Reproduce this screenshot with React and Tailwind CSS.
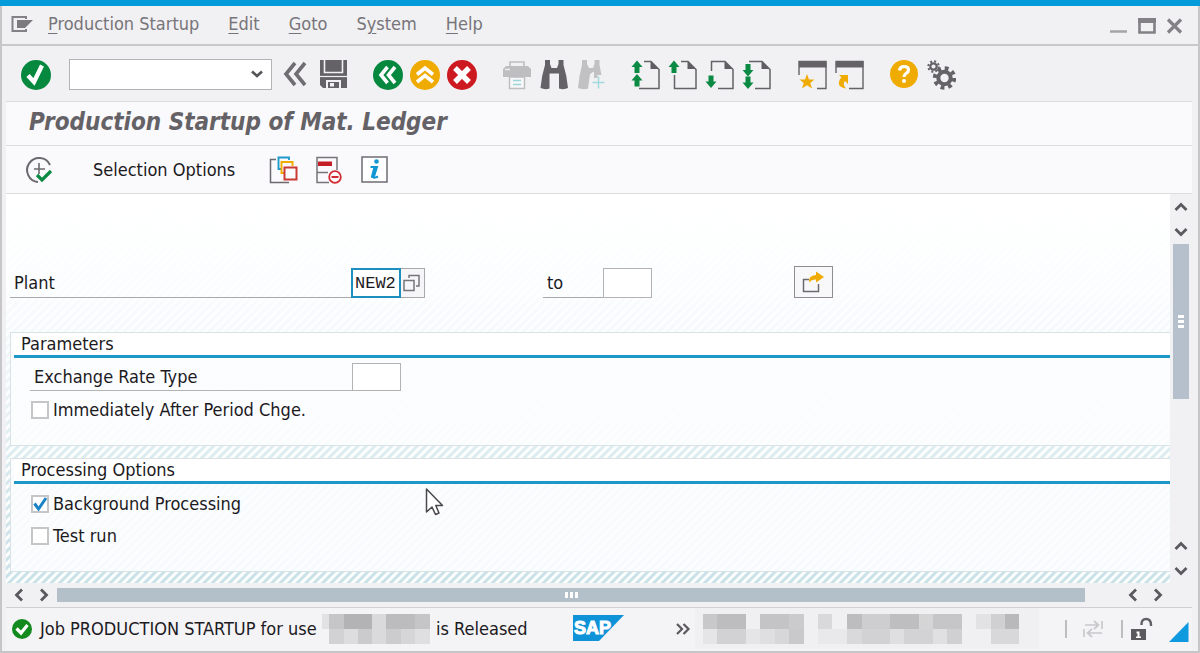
import React from 'react';

const FONT = "font-['DejaVu_Sans_Condensed','Noto_Sans',sans-serif]";

const MENUS = ['Production Startup', 'Edit', 'Goto', 'System', 'Help'];
const MENU_KEYS = [0, 0, 0, 1, 0];

function Icon({ children, className = 'size-[30px]', box = '0 0 30 30' }) {
  return (
    <svg className={`block shrink-0 ${className}`} viewBox={box} fill="none" aria-hidden="true">
      {children}
    </svg>
  );
}

function IconButton({ label, disabled, children }) {
  return (
    <button type="button" aria-label={label} title={label} disabled={disabled} className="block shrink-0">
      <Icon>{children}</Icon>
    </button>
  );
}

function Group({ children }) {
  return <div className="flex items-center gap-[7px]">{children}</div>;
}

const UP = 'M6 0 L11.5 6.5 H8.5 V12.5 H3.5 V6.5 H0.5 Z';
const DOWN = 'M6 12.5 L11.5 6 H8.5 V0 H3.5 V6 H0.5 Z';

function PageIcon({ open, arrows }) {
  return (
    <>
      <path d={open} stroke="#646266" strokeWidth="1.5" />
      <path d="M19.5 1 L27.5 9 H19.5 Z" fill="#5f5d61" />
      {arrows.map(([d, y]) => (
        <path key={y} d={d} transform={`translate(0 ${y})`} fill="#0b8a43" />
      ))}
    </>
  );
}

function Toolbar() {
  return (
    <div className="flex h-14 shrink-0 items-center gap-[25px] border-b border-[#dcdbdd] pt-[6px] pb-1 pl-[15px]">
      <div className="flex items-center gap-[7px]">
        <IconButton label="Enter">
          <circle cx="15" cy="15" r="15" fill="#07883f" />
          <path d="M7 15.5 L13 22 L21 5.5" stroke="#fff" strokeWidth="4.4" />
        </IconButton>
        <div className="relative mr-[2px] ml-[11px] w-[203px]">
          <select
            aria-label="Command field"
            className="block h-[31px] w-full appearance-none border border-[#b3b2b5] bg-white px-2 text-base outline-none"
          >
            <option value=""></option>
          </select>
          <svg className="pointer-events-none absolute top-[11px] right-[9px] h-2 w-3" viewBox="0 0 12 8" fill="none">
            <path d="M1 1.5 L6 6 L11 1.5" stroke="#555357" strokeWidth="2.6" />
          </svg>
        </div>
        <IconButton label="Close command field">
          <path d="M14 3 L5 14 L14 25 M24 3 L15 14 L24 25" stroke="#6f6d71" strokeWidth="3.6" />
        </IconButton>
        <IconButton label="Save">
          <path d="M2 0 H29 V28 H5 L2 25 Z" fill="#646266" />
          <path d="M6.5 0 V12.5 H24.5 V0" stroke="#f1f0f2" strokeWidth="1.6" />
          <path d="M2 16.5 H29" stroke="#f1f0f2" strokeWidth="1.2" />
          <path d="M8 28 V20 H23 V28 Z" fill="#f1f0f2" />
          <path d="M10 22 H21 V28 H10 Z" fill="#646266" />
          <path d="M12 23 H16 V26.5 H12 Z" fill="#f1f0f2" />
        </IconButton>
      </div>
      <Group>
        <IconButton label="Back">
          <circle cx="15" cy="15" r="15" fill="#07883f" />
          <path d="M14.5 7 L8 15 L14.5 23 M22 7 L15.5 15 L22 23" stroke="#fff" strokeWidth="3.6" />
        </IconButton>
        <IconButton label="Exit">
          <circle cx="15" cy="15" r="15" fill="#efab00" />
          <path d="M7 14.5 L15 8 L23 14.5 M7 22 L15 15.5 L23 22" stroke="#fff" strokeWidth="3.6" />
        </IconButton>
        <IconButton label="Cancel">
          <circle cx="15" cy="15" r="15" fill="#cc1a20" />
          <path d="M8 8 L22 22 M22 8 L8 22" stroke="#fff" strokeWidth="5.4" />
        </IconButton>
      </Group>
      <Group>
        <IconButton label="Print" disabled>
          <path d="M8 6 V2 H22 V6" stroke="#bebdc0" strokeWidth="1.6" />
          <path d="M4 6 H26 L29 9 V17 H1 V9 Z" fill="#bebdc0" />
          <path d="M3 9.5 H8" stroke="#f1f0f2" strokeWidth="1.4" />
          <path d="M7.5 17 H22.5 V28.5 H7.5 Z" fill="#f7f6f8" stroke="#bebdc0" strokeWidth="1.4" />
          <path d="M11 20.5 H19 M11 24.5 H19" stroke="#9ad6d8" strokeWidth="1.5" />
        </IconButton>
        <IconButton label="Find">
          <path d="M6 0 H11 V4 L12.5 8 H18 L19.5 4 V0 H24.5 V5 Q28 16 29 28 Q25 30 20 28.5 V13.5 H10.5 V28.5 Q6 30 1.5 28 Q2.5 16 6 5 Z" fill="#646266" />
        </IconButton>
        <IconButton label="Find next" disabled>
          <path d="M6 0 H11 V4 L13 8 H17 L18.5 4 V0 H23.5 V5 L25.5 15 H21.5 V18 H18 V11.5 L14 14 L12 28.5 Q7 30 2 28 Q3 16 6 5 Z" fill="#c1c0c3" />
          <path d="M22.5 16.5 V28.5 M16.5 22.5 H28.5" stroke="#a3d9de" strokeWidth="1.5" />
        </IconButton>
      </Group>
      <Group>
        <IconButton label="First page">
          <PageIcon open="M13 1.5 H20 L28 9.5 V28.5 H8" arrows={[[UP, 0.5], [UP, 14]]} />
        </IconButton>
        <IconButton label="Previous page">
          <PageIcon open="M13 1.5 H20 L28 9.5 V28.5 H6.5 V15" arrows={[[UP, 0.5]]} />
        </IconButton>
        <IconButton label="Next page">
          <PageIcon open="M6.5 11 V1.5 H20 L28 9.5 V28.5 H13" arrows={[[DOWN, 15.5]]} />
        </IconButton>
        <IconButton label="Last page">
          <PageIcon open="M7 1.5 H20 L28 9.5 V28.5 H13" arrows={[[DOWN, 4], [DOWN, 16.5]]} />
        </IconButton>
      </Group>
      <Group>
        <IconButton label="New session">
          <path d="M2 15 V1.5 H29 V28.5 H20" stroke="#646266" strokeWidth="1.4" />
          <path d="M2 1 H29.5 V7.5 H2 Z" fill="#646266" />
          <path d="M10 14 L12 19.5 H17.5 L13.3 23 L15 28.5 L10 25.2 L5 28.5 L6.7 23 L2.5 19.5 H8 Z" fill="#efab00" />
        </IconButton>
        <IconButton label="Create shortcut">
          <path d="M2 13 V1.5 H29 V28.5 H15" stroke="#646266" strokeWidth="1.4" />
          <path d="M2 1 H29.5 V7.5 H2 Z" fill="#646266" />
          <path d="M5 15 H14 V24 L11 21 Q8 24 12 28.5 Q2 27 6 19 L7.5 17.5 Z" fill="#efab00" />
        </IconButton>
      </Group>
      <Group>
        <IconButton label="Help">
          <circle cx="15" cy="14" r="14" fill="#efab00" />
          <path d="M10.5 10.5 Q11 6.5 15 6.5 Q19.5 6.5 19.5 10 Q19.5 12 17 13.5 Q15 14.8 15 17" stroke="#fff" strokeWidth="3.2" />
          <circle cx="15" cy="21" r="2" fill="#fff" />
        </IconButton>
        <IconButton label="Customize local layout">
          <circle cx="18.5" cy="18" r="6.2" stroke="#646266" strokeWidth="4" />
          <circle cx="18.5" cy="18" r="9.7" stroke="#646266" strokeWidth="4" strokeDasharray="3.8 3.81" />
          <circle cx="7.5" cy="6.5" r="3.2" stroke="#646266" strokeWidth="2.2" />
          <circle cx="7.5" cy="6.5" r="5.2" stroke="#646266" strokeWidth="2" strokeDasharray="2.04 2.04" />
        </IconButton>
      </Group>
    </div>
  );
}

function MenuBar() {
  return (
    <div className="flex h-10 shrink-0 items-center border-b-2 border-[#c9c8cb] pr-[14px] pb-[2px] pl-[9px]">
      <button type="button" aria-label="System menu">
        <Icon className="h-[18px] w-[22px]" box="0 0 22 18">
          <path d="M15 14 V16 H1.5 V2 H15 V4" stroke="#838185" strokeWidth="2" />
          <path d="M6 5 H22 L14 13 H6 Z" fill="#7c7a7e" />
        </Icon>
      </button>
      <nav className="ml-[15px] flex flex-1 gap-[29px] text-[18px] leading-6 text-[#77757a]">
        {MENUS.map((m, i) => (
          <button type="button" key={m} className="whitespace-pre">
            {m.slice(0, MENU_KEYS[i])}
            <span className="underline underline-offset-[3px]">{m[MENU_KEYS[i]]}</span>
            {m.slice(MENU_KEYS[i] + 1)}
          </button>
        ))}
      </nav>
      <div className="flex items-center gap-[10px] pt-1">
        <button type="button" aria-label="Minimize">
          <Icon className="h-4 w-[18px]" box="0 0 18 16">
            <path d="M0 13.5 H17" stroke="#a5a4a7" strokeWidth="2.5" />
          </Icon>
        </button>
        <button type="button" aria-label="Maximize">
          <Icon className="h-4 w-[18px]" box="0 0 18 16">
            <path d="M1.5 2 V14.5 H16.5 V2" stroke="#838185" strokeWidth="2.6" />
            <path d="M0 0 H18 V5 H0 Z" fill="#838185" />
          </Icon>
        </button>
        <button type="button" aria-label="Close">
          <Icon className="h-4 w-[18px]" box="0 0 18 16">
            <path d="M2 1.5 L15 14.5 M15 1.5 L2 14.5" stroke="#838185" strokeWidth="3.2" />
          </Icon>
        </button>
      </div>
    </div>
  );
}

function AppToolbar() {
  return (
    <div className="flex h-12 shrink-0 items-center border-b border-[#dcdbdd] bg-[#faf9fb] pl-[18px]">
      <IconButton label="Execute">
        <path d="M26 10 A12 12 0 1 0 14 27" stroke="#6c6a6e" strokeWidth="2" />
        <path d="M15 8 V19 M10 14 H21" stroke="#6c6a6e" strokeWidth="1.6" />
        <path d="M13 20 L18 25 L27 16" stroke="#0b8a43" strokeWidth="3.2" />
      </IconButton>
      <button type="button" className="ml-[39px] text-[18px] leading-6 text-[#1c1a1e]">
        Selection Options
      </button>
      <div className="ml-[34px] flex items-center gap-4">
        <IconButton label="Get variant">
          <path d="M7 4.5 H1.5 V27.5 H20" stroke="#6c6a6e" strokeWidth="1.5" />
          <path d="M12 14 H9.5 V2.5 H20 V5" stroke="#1f9bcb" strokeWidth="1.9" />
          <path d="M15 18 H12.5 V7 H23.5 V11" stroke="#efab00" strokeWidth="1.9" />
          <rect x="15.5" y="12.5" width="12" height="12" stroke="#c93a35" strokeWidth="2" />
        </IconButton>
        <IconButton label="Dynamic selections">
          <path d="M22 15 V2.5 H2 V27.5 H14 M2 17.5 H13" stroke="#77757a" strokeWidth="1.5" />
          <rect x="3" y="6.5" width="14" height="4.5" fill="#c41e26" />
          <circle cx="20" cy="22" r="5.8" fill="#fff" stroke="#d22a31" strokeWidth="1.8" />
          <path d="M16.5 22 H23.5" stroke="#d22a31" strokeWidth="2" />
        </IconButton>
        <IconButton label="Information">
          <rect x="1" y="2" width="25" height="25" fill="#fff" stroke="#77757a" strokeWidth="1.6" />
          <circle cx="15.5" cy="6.5" r="2.3" fill="#1296d4" />
          <path d="M9.5 12 H16 L12.8 22 Q13 23.5 17 21.5" stroke="#1296d4" strokeWidth="2" />
          <path d="M14.3 12 L11.5 23" stroke="#1296d4" strokeWidth="3.6" />
        </IconButton>
      </div>
    </div>
  );
}

function Check({ id, label, checked }) {
  return (
    <div className="flex h-8 items-center gap-1 pl-5">
      <span className="relative block size-[18px] shrink-0">
        <input
          id={id}
          type="checkbox"
          defaultChecked={checked}
          className="peer block size-[18px] appearance-none border-2 border-[#c6c5c8] bg-white"
        />
        <svg className="pointer-events-none absolute inset-0 hidden size-[18px] peer-checked:block" viewBox="0 0 18 18" fill="none">
          <path d="M3.5 8.5 L7.5 14 L15 3" stroke="#1c84c6" strokeWidth="3" />
        </svg>
      </span>
      <label htmlFor={id}>{label}</label>
    </div>
  );
}

function Panel({ title, children }) {
  return (
    <section className="ml-1 h-[114px] border-t border-b border-l border-[#d9e3e6] bg-[#fcfdfe]/90">
      <h2 className="ml-[3px] h-[25px] border-b-[3px] border-[#1c97c8] bg-white pl-[7px] leading-[22px]">{title}</h2>
      {children}
    </section>
  );
}

function Pointer() {
  return (
    <svg className="pointer-events-none absolute top-[293px] left-[419px] h-[30px] w-5" viewBox="0 0 20 30" aria-hidden="true">
      <path
        d="M1.5 2 V25 L7 20 L10.5 27.5 L14 26 L10.8 18.5 H17.5 Z"
        fill="#fff"
        stroke="#4a484c"
        strokeWidth="1.5"
        strokeLinejoin="round"
      />
    </svg>
  );
}

function SelectionScreen() {
  return (
    <main className="relative min-w-0 flex-1 overflow-hidden bg-[linear-gradient(180deg,#fff_0%,#fdfefff2_25%,#fbfdfed0_40%,#fcfefe80_62%,#ffffff40_75%,#ffffff10_100%),repeating-linear-gradient(135deg,#c6dfe6_0px,#c6dfe6_2px,#fcfefe_3px,#fcfefe_5px,#c6dfe6_6px)] text-[18px] leading-6 text-[#1c1a1e]">
      <div className="flex h-[104px] items-end pl-1">
        <label htmlFor="plant" className="flex h-[30px] w-[341px] items-center border-b border-[#a9a8ab] pl-1">
          Plant
        </label>
        <input
          id="plant"
          defaultValue="NEW2"
          className="h-[30px] w-[50px] border-2 border-[#1c8fbf] bg-white px-[2px] font-['Liberation_Mono',monospace] text-[17px] outline-none"
        />
        <button type="button" aria-label="Plant value help" className="h-[30px] w-6 border border-l-0 border-[#a9a8ab] bg-[#f6f6f8]">
          <Icon className="size-[22px]" box="0 0 22 22">
            <path d="M8 6 V3.5 H18 V14 H15" stroke="#77757a" strokeWidth="1.5" />
            <rect x="3" y="8.5" width="10" height="10" stroke="#77757a" strokeWidth="1.5" />
          </Icon>
        </button>
        <label htmlFor="plant-to" className="ml-[118px] flex h-[30px] w-[60px] items-center border-b border-[#a9a8ab] pl-1">
          to
        </label>
        <input id="plant-to" className="h-[30px] w-[49px] border border-[#b3b2b5] bg-white px-1 outline-none" />
        <button
          type="button"
          aria-label="Multiple selection"
          className="ml-[142px] flex h-8 w-[39px] items-center justify-center border border-[#8f8d91] bg-[#f8f8fa]"
        >
          <Icon className="size-6" box="0 0 24 24">
            <path d="M7 9.5 H1.5 V21.5 H16.5 V14" stroke="#6c6a6e" strokeWidth="1.5" />
            <path d="M7 12.5 Q6 5.5 14 5 V1.5 L22 7 L14 12.5 V9.5 Q10 9 7 12.5 Z" fill="#efab00" />
          </Icon>
        </button>
      </div>

      <div className="mt-[34px] flex flex-col gap-3">
        <Panel title="Parameters">
          <div className="flex pt-[5px] pl-[19px]">
            <label htmlFor="rate" className="flex h-7 w-[322px] items-center border-b border-[#b3b2b5] pl-1">
              Exchange Rate Type
            </label>
            <input id="rate" className="h-7 w-[49px] border border-[#b3b2b5] bg-white px-1 outline-none" />
          </div>
          <div className="pt-[3px]">
            <Check id="immediate" label="Immediately After Period Chge." />
          </div>
        </Panel>
        <Panel title="Processing Options">
          <div className="pt-1">
            <Check id="background" label="Background Processing" checked />
            <Check id="test" label="Test run" />
          </div>
        </Panel>
      </div>
      <Pointer />
    </main>
  );
}

const CHEVRONS = {
  up: 'M1.5 10 L7 4.5 L12.5 10',
  down: 'M1.5 4 L7 9.5 L12.5 4',
  left: 'M10 1.5 L4.5 7 L10 12.5',
  right: 'M4 1.5 L9.5 7 L4 12.5',
};

function Arrow({ dir }) {
  return (
    <button type="button" aria-label={`Scroll ${dir}`} className="flex size-[25px] items-center justify-center">
      <Icon className="size-[14px]" box="0 0 14 14">
        <path d={CHEVRONS[dir]} stroke="#5b595d" strokeWidth="2.8" />
      </Icon>
    </button>
  );
}

function VerticalScroll() {
  return (
    <div className="flex w-[22px] shrink-0 flex-col items-center bg-[#f1f1f4]">
      <Arrow dir="up" />
      <Arrow dir="down" />
      <div className="flex h-[155px] w-4 flex-col items-center justify-center gap-[2px] bg-[#b6bfcc]">
        <span className="h-[3px] w-[6px] bg-white" />
        <span className="h-[3px] w-[6px] bg-white" />
        <span className="h-[3px] w-[6px] bg-white" />
      </div>
      <div className="flex-1" />
      <Arrow dir="up" />
      <Arrow dir="down" />
    </div>
  );
}

function HorizontalScroll() {
  return (
    <div className="flex h-[25px] shrink-0 items-center border-b border-[#d0cfd2] pr-[22px]">
      <Arrow dir="left" />
      <Arrow dir="right" />
      <div className="ml-px flex h-[14px] flex-1 items-center justify-center gap-[2px] bg-[#b3bfc9]">
        <span className="h-[6px] w-[3px] bg-white" />
        <span className="h-[6px] w-[3px] bg-white" />
        <span className="h-[6px] w-[3px] bg-white" />
      </div>
      <div className="w-[35px]" />
      <Arrow dir="left" />
      <Arrow dir="right" />
    </div>
  );
}

const USER_BLOCKS = [
  [0, 0, 7, '#e2e1e3'], [7, 0, 15, '#c6c5c7'], [22, 0, 28, '#b3b2b4'], [50, 0, 14, '#dad9db'],
  [64, 0, 29, '#bcbbbd'], [93, 0, 15, '#c5c4c6'], [7, 1, 15, '#d2d1d3'], [22, 1, 14, '#dddcde'],
  [36, 1, 14, '#cbcacc'], [50, 1, 14, '#dad9db'], [64, 1, 15, '#cccbcd'], [79, 1, 14, '#d6d5d7'], [93, 1, 15, '#dfdee0'],
];

const SYSTEM_BLOCKS = [
  [8, 0, 14, '#c8c7c9'], [22, 0, 29, '#bdbcbe'], [65, 0, 29, '#c4c3c5'], [94, 0, 15, '#cbcacc'],
  [123, 0, 14, '#d9d8da'], [152, 0, 15, '#bdbcbe'], [167, 0, 28, '#ceced0'], [195, 0, 29, '#bebdbf'],
  [224, 0, 14, '#d6d5d5'], [238, 0, 29, '#c6c5c7'], [281, 0, 15, '#e2e1e3'], [296, 0, 14, '#d0cfd1'], [310, 0, 14, '#b9b8ba'],
  [8, 1, 14, '#e5e4e6'], [22, 1, 29, '#d2d1d3'], [51, 1, 14, '#e5e4e6'], [65, 1, 15, '#dfdee0'], [80, 1, 14, '#d7d6d8'],
  [94, 1, 15, '#c9c8ca'], [123, 1, 29, '#e9e8ea'], [152, 1, 15, '#d9d8da'], [167, 1, 28, '#d2d1d3'], [195, 1, 14, '#dfdee0'],
  [209, 1, 29, '#d3d2d4'], [238, 1, 14, '#e0dfe1'], [252, 1, 15, '#d0cfd1'], [296, 1, 28, '#d8d7d9'],
];

function Mosaic({ blocks, width, className }) {
  return (
    <svg className={`block h-[30px] shrink-0 ${className}`} viewBox={`0 0 ${width} 30`} shapeRendering="crispEdges" aria-hidden="true">
      {blocks.map(([x, row, w, fill]) => (
        <rect key={`${x}-${row}`} x={x} y={row * 15} width={w} height="15" fill={fill} />
      ))}
    </svg>
  );
}

function StatusBar() {
  return (
    <footer className="flex h-[43px] shrink-0 items-center bg-[#f4f3f5] pb-[2px] pl-[6px] text-[18px] leading-6 text-[#1c1a1e]">
      <div className="flex w-[560px] items-center whitespace-nowrap">
        <Icon className="mr-2 size-5" box="0 0 20 20">
          <circle cx="10" cy="10" r="10" fill="#128a1e" />
          <path d="M4.5 9.5 L9 14 L15.5 6" stroke="#fff" strokeWidth="3.2" />
        </Icon>
        <span className="w-[282px]">Job PRODUCTION STARTUP for use</span>
        <Mosaic blocks={USER_BLOCKS} width={108} className="w-[108px]" />
        <span className="ml-[6px]">is Released</span>
      </div>
      <svg className="block h-[27px] w-[52px] shrink-0" viewBox="0 0 52 27" role="img" aria-label="SAP">
        <path d="M1 0 H52 L27 26 H1 Z" fill="#0f93d8" />
        <text x="2" y="19" fontSize="18" fontWeight="700" fill="#fff" stroke="#fff" strokeWidth="1" fontFamily="Liberation Sans, sans-serif">
          SAP
        </text>
      </svg>
      <button type="button" aria-label="Show system information" className="ml-[51px]">
        <Icon className="h-[14px] w-4" box="0 0 16 14">
          <path d="M2 2 L7 7 L2 12 M8.5 2 L13.5 7 L8.5 12" stroke="#5b595d" strokeWidth="2.2" />
        </Icon>
      </button>
      <div className="ml-1 flex h-full items-center bg-[#f0eff1]">
        <Mosaic blocks={SYSTEM_BLOCKS} width={344} className="w-[344px]" />
      </div>
      <div className="flex flex-1 items-center justify-end">
        <span className="h-[18px] w-[2px] bg-[#bdbcbf]" />
        <Icon className="ml-[15px] h-[18px] w-[22px]" box="0 0 22 18">
          <path d="M3 5 H16 M12 1 L16.5 5 L12 9 M20 1 V9 M20 13 H6 M10 9 L5.5 13 L10 17 M2 9 V17" stroke="#c9c8cb" strokeWidth="1.7" />
        </Icon>
        <span className="ml-[17px] h-[18px] w-[2px] bg-[#bdbcbf]" />
        <button type="button" aria-label="Data entry mode" className="ml-[7px]">
          <Icon className="h-6 w-[23px]" box="0 0 23 24">
            <path d="M11.5 8 V7 Q11.5 2 16 2 Q21 2 21 8 V9" stroke="#646266" strokeWidth="2.4" />
            <rect x="1" y="12" width="15" height="11" fill="#5b595d" />
            <path d="M6.5 14.5 H9.5 V19.5 H11 V21 H6 V19.5 H7.5 V16.5 H6.5 Z" fill="#fff" />
          </Icon>
        </button>
        <Icon className="mt-[6px] mr-[3px] ml-4 size-5" box="0 0 20 20">
          <path d="M19.5 0 V20 H0 Z" fill="#0f9ae0" />
        </Icon>
      </div>
    </footer>
  );
}

export default function App() {
  return (
    <div className={`flex min-h-screen flex-col border-t-[6px] border-[#049bdb] bg-[#f1f0f2] ${FONT}`}>
      <div className="flex flex-1 flex-col border-r-2 border-b-2 border-l-2 border-[#c6c5c8]">
        <MenuBar />
        <div className="flex flex-1 flex-col pr-[6px] pl-1">
          <Toolbar />
          <div className="flex h-11 shrink-0 items-center border-b border-[#dcdbdd] bg-[#faf9fb] pb-1 pl-[23px]">
            <h1 className="text-[24px] leading-7 font-bold text-[#646266] italic">Production Startup of Mat. Ledger</h1>
          </div>
          <AppToolbar />
          <div className="flex flex-1">
            <SelectionScreen />
            <VerticalScroll />
          </div>
          <HorizontalScroll />
          <StatusBar />
        </div>
      </div>
    </div>
  );
}
